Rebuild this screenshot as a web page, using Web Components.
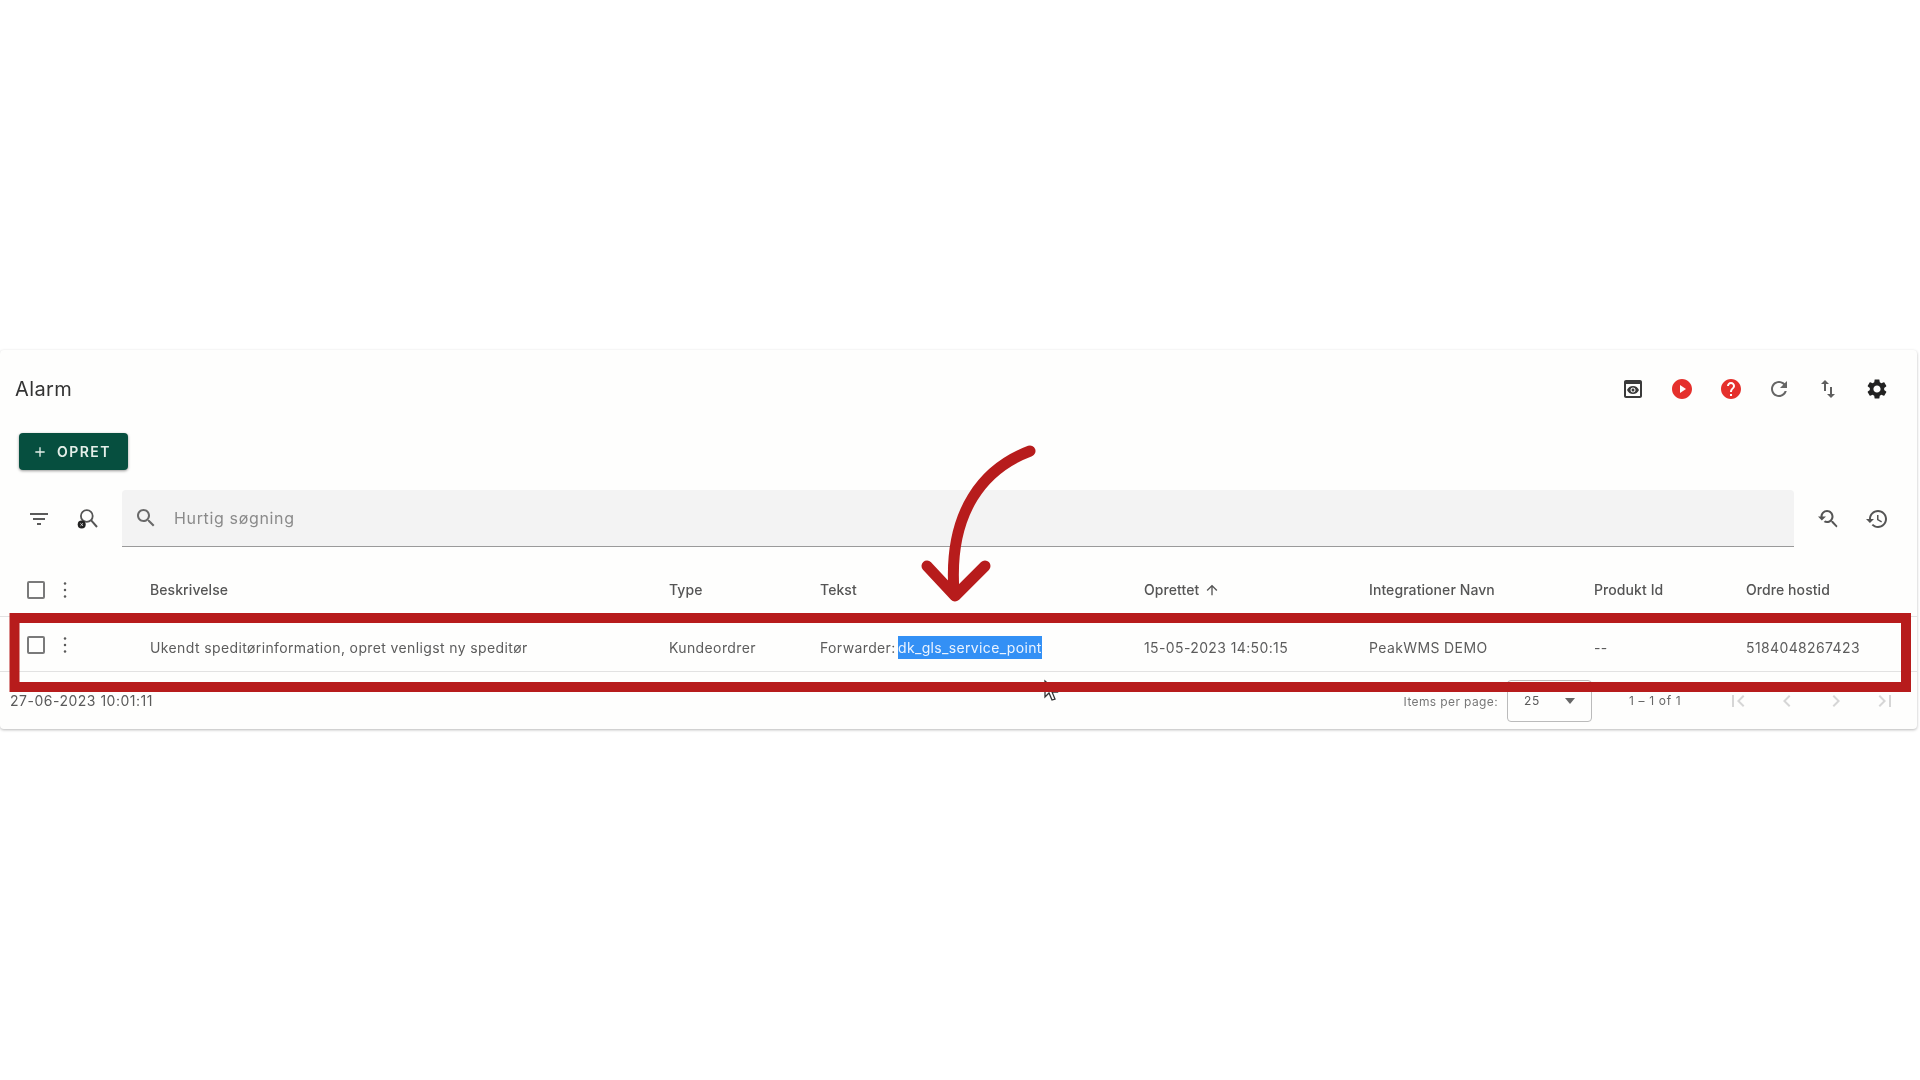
<!DOCTYPE html>
<html lang="da"><head><meta charset="utf-8"><title>Alarm</title>
<style>
html,body{margin:0;background:#fff;font-family:Inter,"Liberation Sans",sans-serif;height:1080px;overflow:hidden}
</style></head><body>
<alarm-page></alarm-page>
<script>
const P={
preview:'M19 3H5c-1.11 0-2 .9-2 2v14c0 1.1.89 2 2 2h14c1.1 0 2-.9 2-2V5c0-1.1-.89-2-2-2zm0 16H5V7h14v12zm-5.5-6c0 .83-.67 1.5-1.5 1.5s-1.5-.67-1.5-1.5.67-1.5 1.5-1.5 1.5.67 1.5 1.5zM12 9c-2.73 0-5.06 1.66-6 4 .94 2.34 3.27 4 6 4s5.06-1.66 6-4c-.94-2.34-3.27-4-6-4zm0 6.5c-1.38 0-2.5-1.12-2.5-2.5s1.12-2.5 2.5-2.5 2.5 1.12 2.5 2.5-1.12 2.5-2.5 2.5z',
refresh:'M17.65 6.35C16.2 4.9 14.21 4 12 4c-4.42 0-7.99 3.58-7.99 8s3.57 8 7.99 8c3.73 0 6.84-2.55 7.73-6h-2.08c-.82 2.33-3.04 4-5.65 4-3.31 0-6-2.69-6-6s2.69-6 6-6c1.66 0 3.14.69 4.22 1.78L13 11h7V4l-2.35 2.35z',
swap:'M16 17.01V10h-2v7.01h-3L15 21l4-3.99h-3zM9 3L5 6.99h3V14h2V6.99h3L9 3z',
settings:'M19.14 12.94c.04-.3.06-.61.06-.94 0-.32-.02-.64-.07-.94l2.03-1.58c.18-.14.23-.41.12-.61l-1.92-3.32c-.12-.22-.37-.29-.59-.22l-2.39.96c-.5-.38-1.03-.7-1.62-.94l-.36-2.54c-.04-.24-.24-.41-.48-.41h-3.84c-.24 0-.43.17-.47.41l-.36 2.54c-.59.24-1.13.57-1.62.94l-2.39-.96c-.22-.08-.47 0-.59.22L2.74 8.87c-.12.21-.08.47.12.61l2.03 1.58c-.05.3-.09.63-.09.94s.02.64.07.94l-2.03 1.58c-.18.14-.23.41-.12.61l1.92 3.32c.12.22.37.29.59.22l2.39-.96c.5.38 1.03.7 1.62.94l.36 2.54c.05.24.24.41.48.41h3.84c.24 0 .44-.17.47-.41l.36-2.54c.59-.24 1.13-.56 1.62-.94l2.39.96c.22.08.47 0 .59-.22l1.92-3.32c.12-.22.07-.47-.12-.61l-2.01-1.58zM12 15.6c-1.98 0-3.6-1.62-3.6-3.6s1.62-3.6 3.6-3.6 3.6 1.62 3.6 3.6-1.62 3.6-3.6 3.6z',
filter:'M10 18h4v-2h-4v2zM3 6v2h18V6H3zm3 7h12v-2H6v2z',
search:'M15.5 14h-.79l-.28-.27C15.41 12.59 16 11.11 16 9.5 16 5.91 13.09 3 9.5 3S3 5.91 3 9.5 5.91 16 9.5 16c1.61 0 3.09-.59 4.23-1.57l.27.28v.79l5 4.99L20.49 19l-4.99-5zm-6 0C7.01 14 5 11.99 5 9.5S7.01 5 9.5 5 14 7.01 14 9.5 11.99 14 9.5 14z',
searched:'M17.01 14h-.8l-.27-.27c.98-1.14 1.57-2.61 1.57-4.23 0-3.59-2.91-6.5-6.5-6.5s-6.5 3-6.5 6.5H2l3.84 4 4.16-4H6.51C6.51 7 8.53 5 11.01 5s4.5 2.01 4.5 4.5c0 2.48-2.02 4.5-4.5 4.5-.65 0-1.26-.14-1.82-.38L7.71 15.1c.97.57 2.09.9 3.3.9 1.61 0 3.08-.59 4.22-1.57l.27.27v.79l5.01 5L21.49 19l-4.48-5z',
history:'M13 3c-4.97 0-9 4.03-9 9H1l3.89 3.89.07.14L9 12H6c0-3.87 3.13-7 7-7s7 3.13 7 7-3.13 7-7 7c-1.93 0-3.68-.79-4.94-2.06l-1.42 1.42C8.27 19.99 10.51 21 13 21c4.97 0 9-4.03 9-9s-4.03-9-9-9zm-1 5v5l4.28 2.54.72-1.21-3.5-2.08V8H12z',
first:'M18.41 16.59L13.82 12l4.59-4.59L17 6l-6 6 6 6zM6 6h2v12H6z',
prev:'M15.41 7.41L14 6l-6 6 6 6 1.41-1.41L10.83 12z',
next:'M10 6L8.59 7.41 13.17 12l-4.58 4.59L10 18l6-6z',
last:'M5.59 7.41L10.18 12l-4.59 4.59L7 18l6-6-6-6zM16 6h2v12h-2z',
up:'M4 12l1.41 1.41L11 7.83V20h2V7.83l5.58 5.59L20 12l-8-8-8 8z',
plus:'M19 13h-6v6h-2v-6H5v-2h6V5h2v6h6v2z',
help:'M12 2C6.48 2 2 6.48 2 12s4.48 10 10 10 10-4.48 10-10S17.52 2 12 2zm1 17h-2v-2h2v2zm2.07-7.75l-.9.92C13.45 12.9 13 13.5 13 15h-2v-.5c0-1.1.45-2.1 1.17-2.83l1.24-1.26c.37-.36.59-.86.59-1.41 0-1.1-.9-2-2-2s-2 .9-2 2H8c0-2.21 1.79-4 4-4s4 1.79 4 4c0 .88-.36 1.68-.93 2.25z',
play:'M12 2C6.48 2 2 6.48 2 12s4.48 10 10 10 10-4.48 10-10S17.52 2 12 2zM10 16v-8l6 4-6 4z'
};
function def(name,html){
  const t=document.createElement('template');t.innerHTML=html;
  customElements.define(name,class extends HTMLElement{
    constructor(){super();this.attachShadow({mode:'open'}).appendChild(t.content.cloneNode(true));}
  });
}
class Ico extends HTMLElement{
  connectedCallback(){
    const s=this.getAttribute('size')||24,c=this.getAttribute('color')||'#5a5a5a',n=this.getAttribute('name');
    let inner=`<path d="${P[n]||''}" fill="${c}"/>`;
    if(n==='dots') inner=`<circle cx="12" cy="5.5" r="1.25" fill="${c}"/><circle cx="12" cy="12" r="1.25" fill="${c}"/><circle cx="12" cy="18.5" r="1.25" fill="${c}"/>`;
    if(n==='searchoff') inner=`<circle cx="11.8" cy="9" r="5.9" fill="none" stroke="${c}" stroke-width="1.8"/><path d="M16 13.2L22 20" fill="none" stroke="${c}" stroke-width="2"/><circle cx="6.7" cy="17.6" r="4" fill="#222"/><path d="M5.4 16.3l2.6 2.6M8 16.3l-2.6 2.6" stroke="#ddd" stroke-width=".9"/>`;
    if(!this.shadowRoot){this.attachShadow({mode:'open'});
    this.shadowRoot.innerHTML=`<style>:host{display:inline-flex;width:${s}px;height:${s}px;flex:none}svg{width:100%;height:100%;display:block}</style><svg viewBox="0 0 24 24">${inner}</svg>`;}
  }
}
customElements.define('x-ico',Ico);
const F='Inter,"Liberation Sans",sans-serif';

def('x-checkbox',`<style>:host{display:block;width:18px;height:18px;box-sizing:border-box;border:2px solid #7a7a7a;border-radius:2px}</style>`);

def('alarm-header',`<style>
:host{display:flex;align-items:center;height:78px;padding:0 28px 0 15px;box-sizing:border-box;justify-content:space-between}
h1{margin:0;font:400 20px/1 ${F};color:#333;letter-spacing:.4px}
.i{display:flex;gap:24.8px}
</style><h1><slot></slot></h1><div class="i">
<x-ico name="preview" color="#3a3a3a"></x-ico><x-ico name="play" color="#e5302c"></x-ico><x-ico name="help" color="#e5302c"></x-ico><x-ico name="refresh" color="#666"></x-ico><x-ico name="swap" color="#5f5f5f"></x-ico><x-ico name="settings" color="#222"></x-ico></div>`);

def('create-button',`<style>
:host{display:inline-flex;align-items:center;gap:9px;height:37px;width:109px;box-sizing:border-box;padding-left:13px;background:#064f3f;border-radius:4px;color:#e4efe9;font:600 14px/1 ${F};letter-spacing:1.45px;box-shadow:0 1px 3px rgba(0,0,0,.4)}
</style><x-ico name="plus" size="16" color="#e4efe9"></x-ico><span><slot></slot></span>`);

def('search-bar',`<style>
:host{display:flex;align-items:center;height:57px;margin-top:20px;padding:0 28px 0 27px}
.b{display:flex;align-items:center;justify-content:center;width:24px;flex:none}
.f{flex:1;height:57px;box-sizing:border-box;margin:0 22px 0 23px;background:#f3f3f3;border-bottom:1px solid #9a9a9a;border-radius:4px 4px 0 0;display:flex;align-items:center;padding-left:12px;gap:16px;color:#8a8a8a;font:400 16px ${F};letter-spacing:.65px}
.r{display:flex;gap:25px}
</style><div class="b"><x-ico name="filter" color="#5a5a5a"></x-ico></div><div class="b" style="margin-left:24px"><x-ico name="searchoff" color="#555"></x-ico></div>
<div class="f"><x-ico name="search" color="#6a6a6a"></x-ico><span><slot></slot></span></div>
<div class="r"><x-ico name="searched" color="#555"></x-ico><x-ico name="history" color="#555"></x-ico></div>`);

const cols='grid-template-columns:150px 519px 151px 324px 225px 225px 152px 1fr;';
def('table-head',`<style>
:host{display:grid;${cols}height:54px;margin-top:16px;padding-top:1px;align-items:center;font:500 14px/1 ${F};color:#555;border-bottom:1px solid #e2e2e2;box-sizing:border-box;letter-spacing:.08px}
.s{display:flex;align-items:center;padding-left:27px;gap:8px}
.o{display:flex;align-items:center;gap:5px}
</style><div class="s"><x-checkbox></x-checkbox><x-ico name="dots" color="#5a5a5a"></x-ico></div>
<div>Beskrivelse</div><div>Type</div><div>Tekst</div><div class="o">Oprettet<x-ico name="up" size="16" color="#555"></x-ico></div><div>Integrationer Navn</div><div>Produkt Id</div><div>Ordre hostid</div>`);

def('table-row',`<style>
:host{display:grid;${cols}height:55px;padding-top:7px;align-items:center;font:400 14px/1 ${F};color:#5c5c5c;border-bottom:1px solid #e2e2e2;box-sizing:border-box;letter-spacing:.38px}
.s{display:flex;align-items:center;padding-left:27px;gap:8px;margin-top:-5px}
mark{background:#3390f5;color:#eaf3ff;padding:3px 0;margin-left:-2px;letter-spacing:.34px}
</style><div class="s"><x-checkbox></x-checkbox><x-ico name="dots" color="#5a5a5a"></x-ico></div>
<div>Ukendt speditørinformation, opret venligst ny speditør</div><div>Kundeordrer</div><div>Forwarder: <mark>dk_gls_service_point</mark></div><div>15-05-2023 14:50:15</div><div>PeakWMS DEMO</div><div>--</div><div>5184048267423</div>`);

def('table-footer',`<style>
:host{display:flex;align-items:center;height:57px;padding-left:10px;font:400 14px/1 ${F};color:#5a5a5a;letter-spacing:.5px}
.d{flex:1}
.l{font-size:12px;letter-spacing:.38px;color:#777;position:relative;top:1px}
.sel{width:85px;height:42px;box-sizing:border-box;margin:0 37px 0 9px;border:1px solid #bbb;border-radius:4px;display:flex;align-items:center;padding-left:16px;font-size:12px;letter-spacing:.6px}
.sel i{margin-left:auto;margin-right:16px;border:5px solid transparent;border-top:6px solid #666;border-bottom:0}
.n{font-size:12px;width:53px;white-space:nowrap;letter-spacing:.65px;margin-right:44px;color:#666}
.p{display:flex;gap:25px;padding-right:20px}
</style><div class="d"><slot></slot></div><span class="l">Items per page:</span><div class="sel">25<i></i></div><span class="n">1 – 1 of 1</span>
<div class="p"><x-ico name="first" color="#d6d6d6"></x-ico><x-ico name="prev" color="#d6d6d6"></x-ico><x-ico name="next" color="#d6d6d6"></x-ico><x-ico name="last" color="#d6d6d6"></x-ico></div>`);

def('alarm-card',`<style>
:host{display:block;width:1917px;height:379px;background:#fefefd;border-radius:4px;box-shadow:0 1px 3px rgba(0,0,0,.28);filter:blur(.55px)}
.a{padding-left:19px;margin-top:5px;height:37px}
</style><alarm-header>Alarm</alarm-header><div class="a"><create-button>OPRET</create-button></div>
<search-bar>Hurtig søgning</search-bar><table-head></table-head><table-row></table-row><table-footer>27-06-2023 10:01:11</table-footer>`);

def('alarm-annotation',`<style>
:host{position:absolute;inset:0;pointer-events:none;display:block}
svg{position:absolute;left:0;top:0;width:1920px;height:1080px}
</style><svg viewBox="0 0 1920 1080">
<path d="M1045 681v16l4-4 3 7 3-1-3-7 5 0z" fill="#fff" stroke="#333" stroke-width="1.3"/>
<rect x="14.5" y="618" width="1891.5" height="69" fill="none" stroke="#b71c1c" stroke-width="10"/>
<path d="M1030 451C985 468 948 510 954 592M927 566L955 596L985 566" fill="none" stroke="#b71c1c" stroke-width="11" stroke-linecap="round" stroke-linejoin="round"/>
</svg>`);

def('alarm-page',`<style>
:host{display:block;position:relative;width:1920px;height:1080px;padding-top:350px;box-sizing:border-box}
</style><alarm-card></alarm-card><alarm-annotation></alarm-annotation>`);
</script>
</body></html>
